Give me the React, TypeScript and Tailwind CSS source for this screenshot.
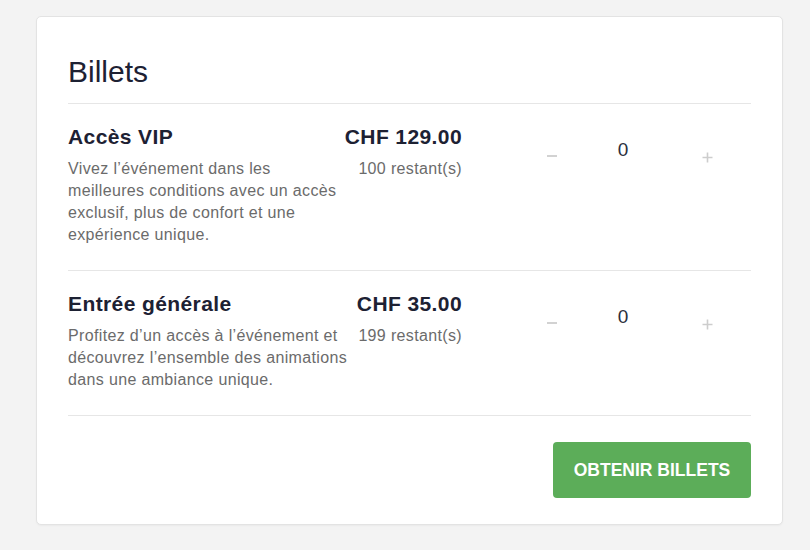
import React from "react";

type Ticket = {
  name: string;
  price: string;
  left: string;
  lines: string[];
};

const tickets: Ticket[] = [
  {
    name: "Accès VIP",
    price: "CHF 129.00",
    left: "100 restant(s)",
    lines: [
      "Vivez l’événement dans les",
      "meilleures conditions avec un accès",
      "exclusif, plus de confort et une",
      "expérience unique.",
    ],
  },
  {
    name: "Entrée générale",
    price: "CHF 35.00",
    left: "199 restant(s)",
    lines: [
      "Profitez d’un accès à l’événement et",
      "découvrez l’ensemble des animations",
      "dans une ambiance unique.",
    ],
  },
];

function TicketRow({ ticket }: { ticket: Ticket }) {
  return (
    <div className="flex border-b border-[#e6e6e6] pt-5 pb-6">
      <div className="w-[394px]">
        <div className="flex justify-between text-[21px] leading-[26px] font-bold tracking-[0.4px] text-[#1d2133]">
          <span>{ticket.name}</span>
          <span>{ticket.price}</span>
        </div>
        <div className="mt-2 flex justify-between text-[16px] leading-[22px] tracking-[0.35px] text-[#6b6b6b]">
          <p className="whitespace-nowrap">
            {ticket.lines.map((l, i) => (
              <React.Fragment key={i}>
                {l}
                {i < ticket.lines.length - 1 && <br />}
              </React.Fragment>
            ))}
          </p>
          <span className="whitespace-nowrap">{ticket.left}</span>
        </div>
      </div>
      <div className="flex items-start pl-[70px]">
        <button className="w-10 h-6 mt-5 flex items-center justify-center">
          <span className="block w-[10px] h-[2px] bg-[#d2d2d2]" />
        </button>
        <div className="ml-[21px] w-[60px] h-6 mt-[14px] text-center text-[19px] leading-6 text-[#2b2f3d]">
          0
        </div>
        <button className="ml-[34px] w-10 h-6 mt-[21px] flex items-center justify-center">
          <svg width="11" height="11" viewBox="0 0 11 11">
            <path d="M5.5 0.5v10M0.5 5.5h10" stroke="#cdcdcd" strokeWidth="1.6" />
          </svg>
        </button>
      </div>
    </div>
  );
}

export default function App() {
  return (
    <div
      className="min-h-screen bg-[#f3f3f3] pt-4 pl-9 pr-[27px] pb-6"
      style={{ fontFamily: '"Liberation Sans", Arial, sans-serif' }}
    >
      <div className="w-[747px] bg-white border border-[#e3e3e3] rounded-[5px] shadow-[0_1px_2px_rgba(0,0,0,0.04)] px-[31px] pt-[37px] pb-[26px]">
        <h1 className="text-[30px] leading-9 text-[#1d2133] pb-[13px] border-b border-[#e6e6e6]">
          Billets
        </h1>
        {tickets.map((t) => (
          <TicketRow key={t.name} ticket={t} />
        ))}
        <div className="flex justify-end pt-[26px]">
          <button className="w-[198px] h-14 rounded-[4px] bg-[#5cad59] text-white text-[17.5px] font-bold">
            OBTENIR BILLETS
          </button>
        </div>
      </div>
    </div>
  );
}
